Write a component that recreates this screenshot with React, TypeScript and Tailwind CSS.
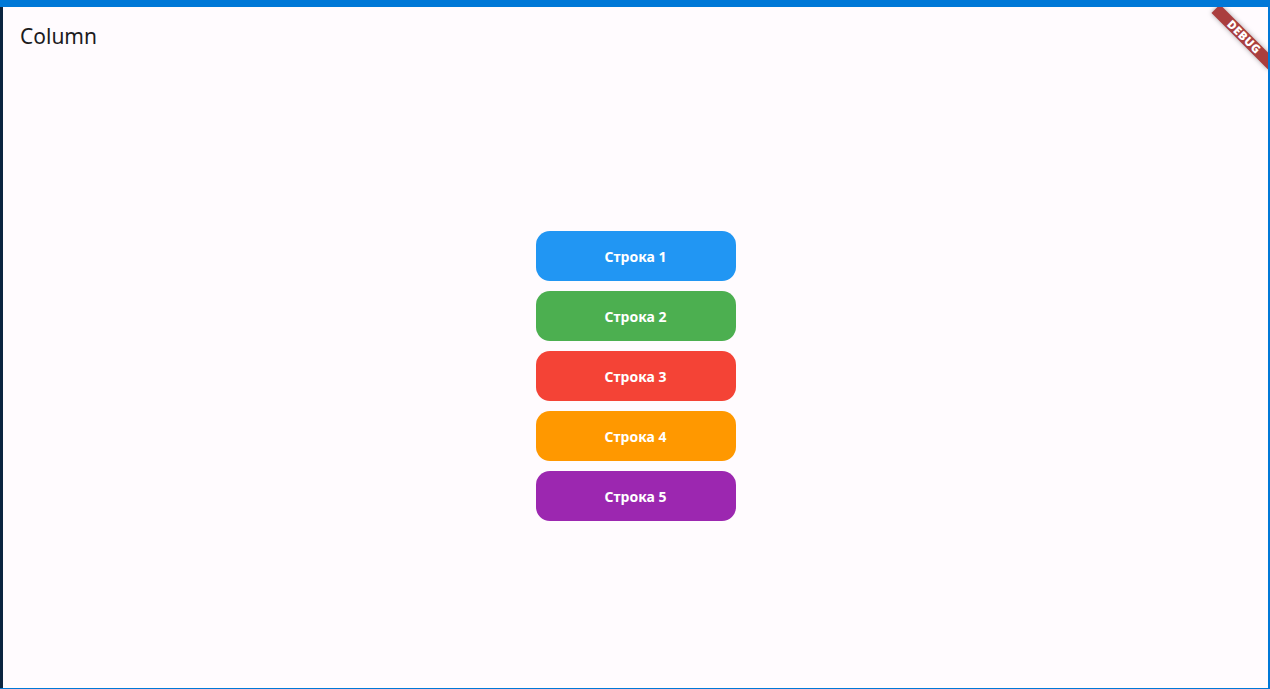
import React from "react";

const rows = [
  { label: "Строка 1", cls: "bg-[#2196f3]" },
  { label: "Строка 2", cls: "bg-[#4caf50]" },
  { label: "Строка 3", cls: "bg-[#f44336]" },
  { label: "Строка 4", cls: "bg-[#ff9800]" },
  { label: "Строка 5", cls: "bg-[#9c27b0]" },
];

export default function App() {
  return (
    <div className="w-[1270px] h-[689px] flex flex-col bg-[#0078d7] overflow-hidden font-['Noto_Sans',sans-serif]">
      <div className="h-[7px] shrink-0" />
      <div className="flex flex-1 min-h-0">
        <div className="w-[3px] shrink-0 bg-[#0b2440]" />
        <div className="flex-1 bg-[#fffbfe] relative flex flex-col overflow-hidden">
          <div className="h-[56px] shrink-0 flex items-center pl-[17px] pt-[2px]">
            <span className="text-[21px] leading-none text-[#1c1b1f]">Column</span>
          </div>
          <div className="flex-1 flex flex-col items-center justify-center gap-[10px]">
            {rows.map((r) => (
              <div
                key={r.label}
                className={`w-[200px] h-[50px] rounded-[14px] flex items-center justify-center pt-[3px] text-white text-[14px] leading-none font-bold ${r.cls}`}
              >
                {r.label}
              </div>
            ))}
          </div>
          <div className="absolute right-[-16px] top-[24px] w-[80px] h-[12px] rotate-45 bg-[#aa3e3e] shadow-[0_0_5px_rgba(0,0,0,0.35)] flex items-center justify-center">
            <span className="text-white text-[11.5px] leading-none font-black tracking-[0.5px]">DEBUG</span>
          </div>
        </div>
        <div className="w-[2px] shrink-0" />
      </div>
      <div className="h-[1px] shrink-0" />
    </div>
  );
}
